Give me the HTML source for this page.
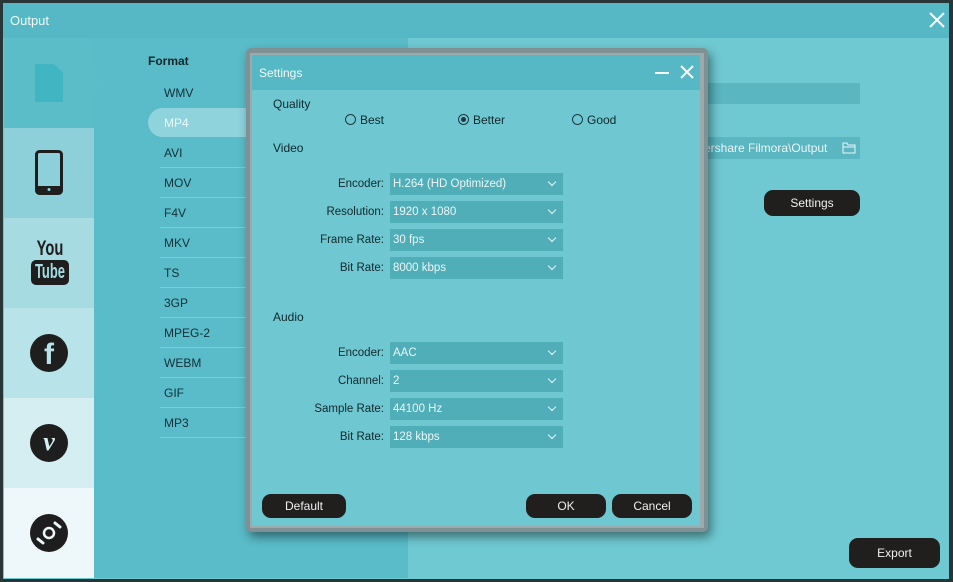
<!DOCTYPE html><html><head><style>
*{margin:0;padding:0;box-sizing:border-box}
body{width:953px;height:582px;overflow:hidden;background:#2a3538;font-family:"Liberation Sans",sans-serif;position:relative}
.a{position:absolute}
.t{font-size:12px;color:#10282c}
.dd{position:absolute;left:390px;width:173px;height:22px;background:#50aeb9;font-size:11.5px;line-height:22px;padding-left:3px;color:#eaf6f8}
.dd:after{content:"";position:absolute;right:8px;top:6px;width:5px;height:5px;border-right:1.5px solid #e8f4f6;border-bottom:1.5px solid #e8f4f6;transform:rotate(45deg)}
.lb{position:absolute;width:130px;left:254px;text-align:right;font-size:11.5px;color:#10282c;line-height:22px}
.btn{position:absolute;background:#211e1e;color:#f0f0f0;border-radius:9px;font-size:12px;text-align:center}
.fi{position:absolute;left:164px;font-size:12px;color:#10303a}
.sep{position:absolute;left:160px;width:90px;height:1px;background:#7dccd5}
.rb{display:inline-block;width:11px;height:11px;border:1px solid #1c3a40;border-radius:50%;vertical-align:-1px;margin-right:4px;position:relative}
</style></head><body>
<div class="a" style="left:3px;top:3px;width:946px;height:576px;background:#6fc9d2"></div>
<div class="a" style="left:3px;top:3px;width:946px;height:35px;background:#55b8c4"></div>
<div class="a" style="left:10px;top:13px;color:#f2fafb;font-size:13px">Output</div>
<svg class="a" style="left:929px;top:12px" width="16" height="16"><path d="M1 1L15 15M15 1L1 15" stroke="#f4fbfc" stroke-width="2"/></svg>
<div class="a" style="left:4px;top:38px;width:90px;height:90px;background:#5bbdc8"></div>
<div class="a" style="left:4px;top:128px;width:90px;height:90px;background:#8dd0d9"></div>
<div class="a" style="left:4px;top:218px;width:90px;height:90px;background:#a6dbe2"></div>
<div class="a" style="left:4px;top:308px;width:90px;height:90px;background:#b8e3e9"></div>
<div class="a" style="left:4px;top:398px;width:90px;height:90px;background:#d5eef2"></div>
<div class="a" style="left:4px;top:488px;width:90px;height:90px;background:#eef8fa"></div>
<svg class="a" style="left:34px;top:63px" width="30" height="40"><path d="M1 1H20L29 10V39H1Z" fill="#3fb6c2"/></svg>
<div class="a" style="left:94px;top:38px;width:314px;height:540px;background:#59bcc8"></div>
<svg class="a" style="left:94px;top:66px" width="16" height="32"><path d="M0 0L14 16L0 32Z" fill="#5bbdc8"/></svg>
<svg class="a" style="left:35px;top:150px" width="30" height="46"><rect x="1.5" y="1.5" width="25" height="42" rx="3" fill="none" stroke="#1e1e1e" stroke-width="3"/><rect x="1.5" y="36" width="25" height="7" fill="#1e1e1e"/><circle cx="14" cy="39.5" r="1.5" fill="#8dd0d9"/></svg>
<div class="a" style="left:24px;top:238px;width:52px;text-align:center;font:bold 21px/22px 'Liberation Sans',sans-serif;color:#1e1e1e;transform:scaleX(.7)">You</div>
<div class="a" style="left:31px;top:260px;width:38px;height:25px;background:#1e1e1e;border-radius:5px;overflow:hidden"><div style="position:absolute;left:-7px;width:52px;text-align:center;font:bold 20px/25px 'Liberation Sans',sans-serif;color:#a6dbe2;transform:scaleX(.65)">Tube</div></div>
<div class="a" style="left:30px;top:334px;width:38px;height:38px;border-radius:50%;background:#1e1e1e;color:#b8e3e9;font:bold 30px/42px 'Liberation Sans',sans-serif;text-align:center">f</div>
<div class="a" style="left:30px;top:424px;width:38px;height:38px;border-radius:50%;background:#1e1e1e;color:#d5eef2;font:bold italic 26px/36px 'Liberation Serif',serif;text-align:center">v</div>
<svg class="a" style="left:29px;top:513px" width="40" height="40"><circle cx="20" cy="20" r="19" fill="#1e1e1e"/><circle cx="20" cy="20" r="5" fill="none" stroke="#eef8fa" stroke-width="2.5"/><path d="M26 10L31 14M9 26L14 30" stroke="#eef8fa" stroke-width="3" stroke-linecap="round"/></svg>
<div class="a" style="left:148px;top:54px;font-weight:bold;font-size:12px;color:#10282c">Format</div>
<div class="a" style="left:148px;top:108px;width:110px;height:29px;border-radius:15px 0 0 15px;background:#8fd3dc"></div>
<div class="fi" style="top:86px">WMV</div>
<div class="fi" style="top:116px;color:#eaf8fa">MP4</div>
<div class="fi" style="top:146px">AVI</div><div class="sep" style="top:167px"></div>
<div class="fi" style="top:176px">MOV</div><div class="sep" style="top:197px"></div>
<div class="fi" style="top:206px">F4V</div><div class="sep" style="top:227px"></div>
<div class="fi" style="top:236px">MKV</div><div class="sep" style="top:257px"></div>
<div class="fi" style="top:266px">TS</div><div class="sep" style="top:287px"></div>
<div class="fi" style="top:296px">3GP</div><div class="sep" style="top:317px"></div>
<div class="fi" style="top:326px">MPEG-2</div><div class="sep" style="top:347px"></div>
<div class="fi" style="top:356px">WEBM</div><div class="sep" style="top:377px"></div>
<div class="fi" style="top:386px">GIF</div><div class="sep" style="top:407px"></div>
<div class="fi" style="top:416px">MP3</div><div class="sep" style="top:437px"></div>
<div class="a" style="left:700px;top:83px;width:160px;height:21px;background:#5ab6c0"></div>
<div class="a" style="left:700px;top:137px;width:160px;height:22px;background:#5ab6c0;color:#eaf6f8;font-size:12px;line-height:22px;padding-left:4px">ershare Filmora\Output</div>
<svg class="a" style="left:842px;top:142px" width="14" height="12"><path d="M1 1H5L6 3H13V11H1Z M1 5H13" fill="none" stroke="#eaf6f8"/></svg>
<div class="btn" style="left:764px;top:190px;width:96px;height:26px;line-height:26px">Settings</div>
<div class="btn" style="left:849px;top:538px;width:91px;height:30px;line-height:30px">Export</div>
<div class="a" style="left:246px;top:48px;width:462px;height:484px;border-radius:5px;background:#7f9194;box-shadow:3px 5px 10px rgba(0,0,0,.45)"></div>
<div class="a" style="left:250px;top:53px;width:454px;height:475px;background:#9aaaad"></div>
<div class="a" style="left:252px;top:55px;width:448px;height:471px;background:#6fc8d1"></div>
<div class="a" style="left:252px;top:55px;width:448px;height:35px;background:#55b8c4"></div>
<div class="a" style="left:259px;top:66px;color:#f2fafb;font-size:12px">Settings</div>
<div class="a" style="left:655px;top:72px;width:14px;height:2px;background:#f4fbfc"></div>
<svg class="a" style="left:680px;top:65px" width="14" height="14"><path d="M1 1L13 13M13 1L1 13" stroke="#f4fbfc" stroke-width="2"/></svg>
<div class="a t" style="left:273px;top:97px">Quality</div>
<div class="a t" style="left:345px;top:113px"><span class="rb"></span>Best</div>
<div class="a t" style="left:458px;top:113px"><span class="rb"><span style="position:absolute;left:2px;top:2px;width:5px;height:5px;border-radius:50%;background:#1c3a40"></span></span>Better</div>
<div class="a t" style="left:572px;top:113px"><span class="rb"></span>Good</div>
<div class="a t" style="left:273px;top:141px">Video</div>
<div class="lb" style="top:173px">Encoder:</div><div class="dd" style="top:173px">H.264 (HD Optimized)</div>
<div class="lb" style="top:201px">Resolution:</div><div class="dd" style="top:201px">1920 x 1080</div>
<div class="lb" style="top:229px">Frame Rate:</div><div class="dd" style="top:229px">30 fps</div>
<div class="lb" style="top:257px">Bit Rate:</div><div class="dd" style="top:257px">8000 kbps</div>
<div class="a t" style="left:273px;top:310px">Audio</div>
<div class="lb" style="top:342px">Encoder:</div><div class="dd" style="top:342px">AAC</div>
<div class="lb" style="top:370px">Channel:</div><div class="dd" style="top:370px">2</div>
<div class="lb" style="top:398px">Sample Rate:</div><div class="dd" style="top:398px">44100 Hz</div>
<div class="lb" style="top:426px">Bit Rate:</div><div class="dd" style="top:426px">128 kbps</div>
<div class="btn" style="left:262px;top:494px;width:84px;height:24px;line-height:24px">Default</div>
<div class="btn" style="left:526px;top:494px;width:80px;height:24px;line-height:24px">OK</div>
<div class="btn" style="left:612px;top:494px;width:80px;height:24px;line-height:24px">Cancel</div>
</body></html>
